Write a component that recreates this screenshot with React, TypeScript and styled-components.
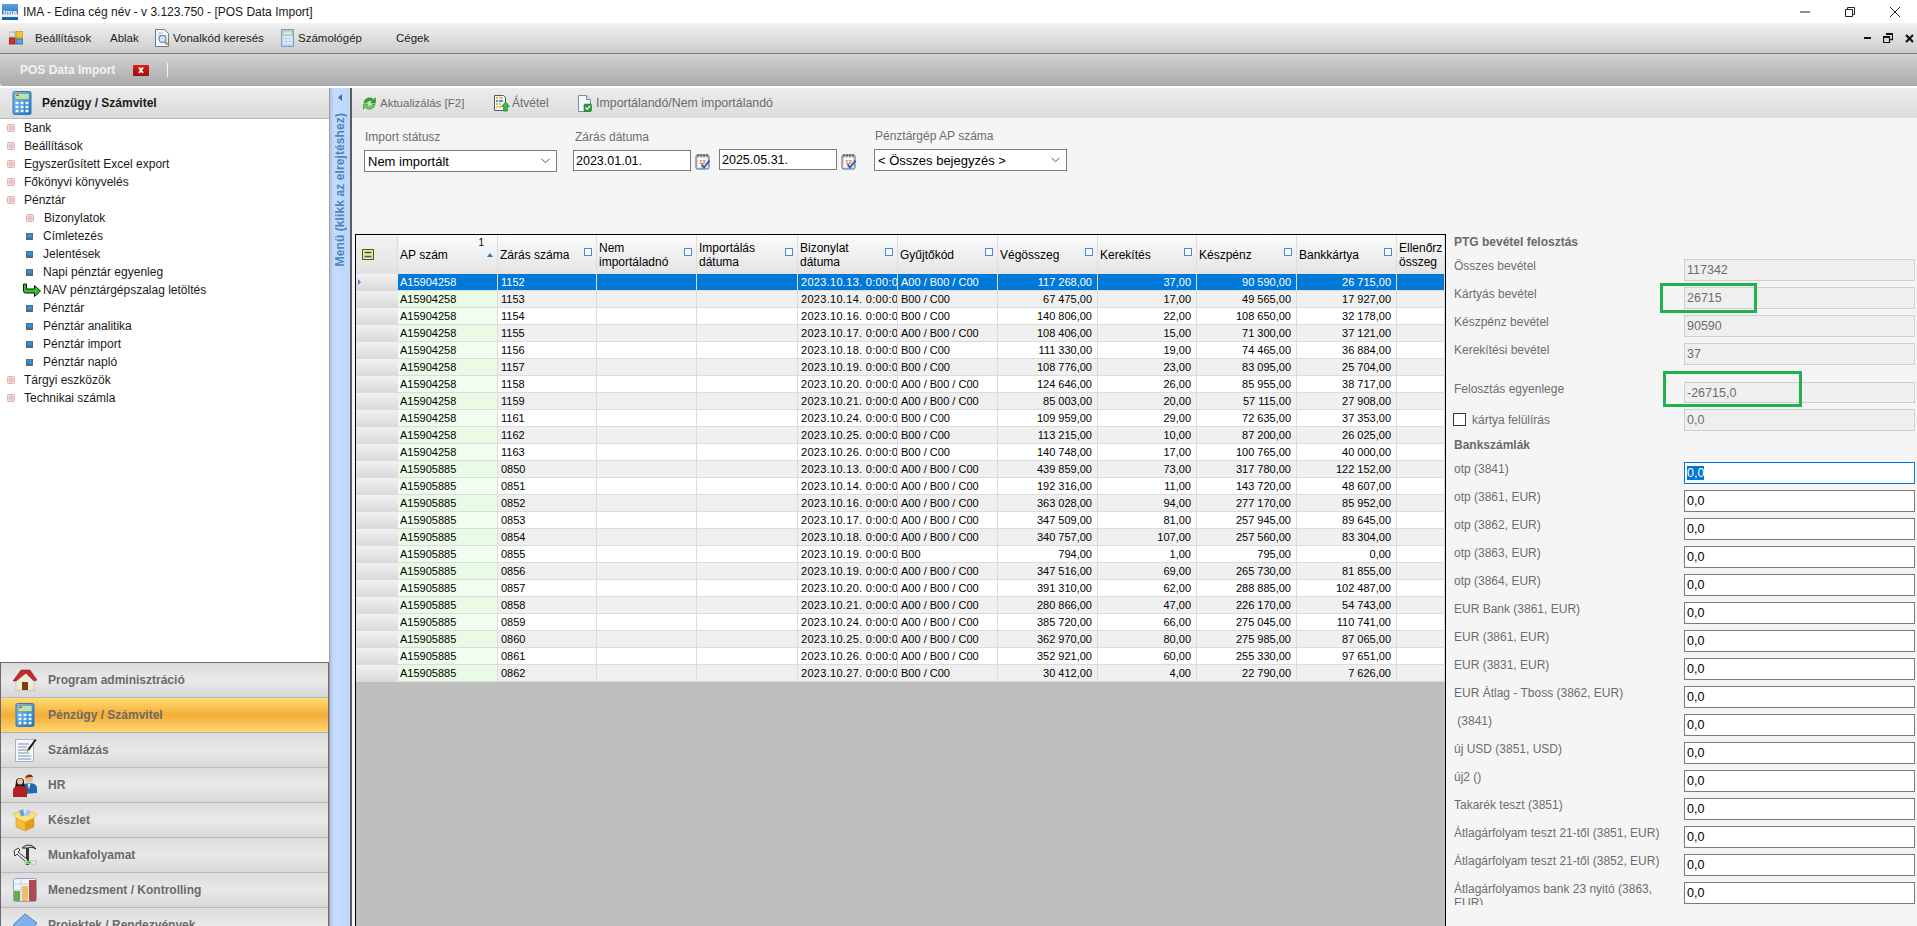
import React from "react";
import styled, { createGlobalStyle } from "styled-components";

const Global = createGlobalStyle`
  html, body { margin: 0; padding: 0; background: #fff; overflow: hidden; }
  body { font-family: "Liberation Sans", Arial, sans-serif; font-size: 12px; color: #000; }
  * { box-sizing: border-box; }
`;

const Window = styled.div`
  width: 1917px; height: 926px; display: flex; flex-direction: column; overflow: hidden; background: #fff;
`;
const TitleBar = styled.div`
  height: 23px; flex: none; display: flex; align-items: center; padding-left: 2px; background: #fff;
`;
const TitleText = styled.span`
  margin-left: 5px; font-size: 12px; color: #1a1a1a; white-space: nowrap;
`;
const WindowButtons = styled.div`
  margin-left: auto; display: flex; align-items: center; padding-right: 17px; gap: 35px;
`;
const MenuBar = styled.div`
  height: 31px; flex: none; display: flex; align-items: center; padding-left: 9px;
  background: linear-gradient(#f2f2f2, #cbcbcb); border-bottom: 1px solid #7f7f7f;
`;
const MenuItem = styled.div<{ $w: number; $gap?: number }>`
  width: ${p => p.$w}px; flex: none; display: flex; align-items: center; gap: ${p => p.$gap ?? 5}px;
  font-size: 11.5px; color: #1c1c1c; white-space: nowrap;
`;
const MdiButtons = styled.div`
  margin-left: auto; display: flex; align-items: center; gap: 12px; padding-right: 3px;
`;
const TabBar = styled.div`
  height: 32px; flex: none; display: flex; align-items: center; padding-left: 20px;
  background: linear-gradient(#d2d2d2, #a9a9a9); border-bottom-left-radius: 3px;
`;
const TabTitle = styled.span`
  width: 113px; font-weight: bold; font-size: 12px; color: #f2f2f2; white-space: nowrap;
`;
const TabSeparator = styled.span`
  width: 1px; height: 14px; margin-left: 18px; background: #f4f4f4;
`;
const Body = styled.div`
  flex: 1; min-height: 0; margin-top: 2px; display: flex; background: #fff;
`;
const Sidebar = styled.aside`
  width: 330px; flex: none; display: flex; flex-direction: column; border-right: 1px solid #a0a0a0; background: #fff; overflow: hidden;
`;
const SideHeader = styled.div`
  height: 31px; flex: none; display: flex; align-items: center; padding-left: 12px; gap: 10px;
  background: linear-gradient(#ececec, #dadada); border-bottom: 1px solid #b5b5b5;
  font-weight: bold; font-size: 12px; color: #1a1a1a;
`;
const Tree = styled.ul`
  list-style: none; margin: 0; padding: 0; flex: 1;
`;
const TreeRow = styled.li<{ $level: number; $arrow?: boolean }>`
  height: 18px; display: flex; align-items: center; font-size: 12px; color: #1a1a1a; white-space: nowrap;
  padding-left: ${p => (p.$arrow ? 22 : p.$level === 0 ? 7 : 26)}px;
  gap: ${p => (p.$arrow ? 1 : p.$level === 0 ? 9 : 10)}px;
`;
const Nav = styled.nav`
  flex: none; height: 264px; border: 1px solid #6a6a6a; border-bottom: 0; overflow: hidden;
`;
const NavItem = styled.div<{ $active?: boolean }>`
  height: 35px; display: flex; align-items: center; padding-left: 12px; gap: 11px;
  font-weight: bold; font-size: 12px; color: #6a6a6a; white-space: nowrap;
  border-bottom: 1px solid ${p => (p.$active ? "#aeb4bd" : "#b9b9b9")};
  background: ${p =>
    p.$active
      ? "linear-gradient(#ffdc75, #f4ad35 50%, #ffd673)"
      : "linear-gradient(#dcdcdc, #e9e9e9 50%, #d8d8d8)"};
`;
const NavIcon = styled.span`
  width: 24px; height: 24px; flex: none; display: flex; justify-content: center;
`;
const Strip = styled.div`
  width: 20px; flex: none; display: flex; flex-direction: column; align-items: center; padding-top: 6px;
  background: linear-gradient(90deg, #a8c4e6, #c3dcff 20%, #bdd7fb);
`;
const StripLabel = styled.span`
  margin-top: 12px; writing-mode: vertical-rl; transform: rotate(180deg); font-weight: bold; font-size: 12px;
  color: #4d84bb; white-space: nowrap; letter-spacing: 0.1px;
`;
const Divider = styled.div`
  width: 2px; flex: none; background: #5c5c5c;
`;
const Main = styled.main`
  flex: 1; min-width: 0; display: flex; flex-direction: column; background: #f5f5f5;
`;
const Toolbar = styled.div`
  height: 30px; flex: none; display: flex; align-items: center; padding-left: 10px;
  background: linear-gradient(#ececec, #dcdcdc);
`;
const ToolButton = styled.div<{ $w?: number; $gap: number; $size: number }>`
  ${p => (p.$w ? `width: ${p.$w}px;` : "")} flex: none; display: flex; align-items: center; gap: ${p => p.$gap}px;
  font-size: ${p => p.$size}px; color: #6b6b6b; white-space: nowrap;
`;
const FilterBar = styled.div`
  height: 116px; flex: none; display: flex; padding: 12px 0 0 12px;
`;
const FilterGroup = styled.div<{ $ml?: number; $up?: number }>`
  margin-left: ${p => p.$ml ?? 0}px; margin-top: ${p => -(p.$up ?? 0)}px;
`;
const FilterLabel = styled.div`
  height: 14px; line-height: 14px; margin: 0 0 6px 1px; font-size: 12px; color: #6d6d6d; white-space: nowrap;
`;
const FilterLabelDate = styled(FilterLabel)`
  margin-left: 2px;
`;
const Select = styled.div`
  width: 193px; height: 22px; display: flex; align-items: center; padding: 0 6px 0 3px;
  justify-content: space-between; border: 1px solid #7a7a7a; background: #fff; font-size: 13px; color: #000; white-space: nowrap;
`;
const DateRow = styled.div`
  display: flex; align-items: flex-start;
`;
const DateField = styled.div<{ $up?: boolean }>`
  width: 118px; height: 21px; display: flex; align-items: center; padding-left: 2px;
  border: 1px solid #7a7a7a; background: #fff; font-size: 12.5px; color: #000;
  margin-top: ${p => (p.$up ? -1 : 0)}px;
`;
const CalendarSlot = styled.span<{ $w: number }>`
  width: ${p => p.$w}px; flex: none; padding: 3px 0 0 4px;
`;
const Lower = styled.div`
  flex: 1; min-height: 0; display: flex; padding-left: 3px;
`;
const Grid = styled.div`
  width: 1091px; flex: none; border: 1px solid #000; border-bottom: 0; background: #bebebe; overflow: hidden;
`;
const COLS = "42px 100px 99px 100px 101px 100px 100px 100px 99px 100px 100px 48px";
const HeaderRow = styled.div`
  display: grid; grid-template-columns: ${COLS}; height: 39px;
  background: linear-gradient(#fbfbfb, #e4e4e4);
`;
const HeaderCell = styled.div`
  position: relative; display: flex; align-items: center; padding: 0 12px 0 2px; font-size: 12px; line-height: 14px; color: #000;
  border-right: 1px solid #dedede; overflow: hidden;
`;
const HeaderCorner = styled(HeaderCell)`
  padding: 0 0 0 6px; background: linear-gradient(#f2f2f2, #e2e2e2);
`;
const HeaderNowrap = styled.span`
  white-space: nowrap;
`;
const FilterGlyph = styled.span`
  position: absolute; right: 4px; top: 13px; width: 8px; height: 8px; border: 1px solid #4f86d9; background: #f7f9ff;
`;
const SortGlyph = styled.span`
  position: absolute; right: 4px; top: 18px; width: 0; height: 0;
  border-left: 3.5px solid transparent; border-right: 3.5px solid transparent; border-bottom: 4px solid #1f78c8;
`;
const SortIndex = styled.span`
  position: absolute; right: 13px; top: 2px; font-size: 10px; line-height: 11px;
`;
const DataRow = styled.div<{ $sel: boolean; $alt: boolean }>`
  display: grid; grid-template-columns: ${COLS}; height: 17px; font-size: 11px;
  color: ${p => (p.$sel ? "#fff" : "#000")};
  background: ${p => (p.$sel ? "#0078d7" : p.$alt ? "#f0f0f0" : "#fff")};
  --ap: ${p => (p.$sel ? "#0078d7" : p.$alt ? "#e9fbe5" : "#f0fdef")};
`;
const RowHead = styled.div`
  position: relative; background: linear-gradient(#f1f1f1, #dadada); border-bottom: 1px solid #dcdcdc;
`;
const RowMarker = styled.span`
  position: absolute; left: 2px; top: 5px; width: 0; height: 0;
  border-top: 3px solid transparent; border-bottom: 3px solid transparent; border-left: 3px solid #4f86d9;
`;
const Cell = styled.div<{ $right?: boolean; $ap?: boolean; $date?: boolean }>`
  padding: ${p => (p.$right ? "0 5px 0 0" : p.$ap ? "0 0 0 2px" : "0 0 0 3px")}; text-align: ${p => (p.$right ? "right" : "left")};
  line-height: 16px; border-right: 1px solid #dcdcdc; border-bottom: 1px solid #dcdcdc; overflow: hidden; white-space: nowrap;
  ${p => (p.$ap ? "background: var(--ap);" : "")}
  ${p => (p.$date ? "letter-spacing: 0.3px;" : "")}
`;
const Panel = styled.section`
  position: relative; flex: 1; min-width: 0; padding-left: 8px; overflow: hidden; background: #f5f5f5;
`;
const PanelTitle = styled.div<{ $h: number }>`
  height: ${p => p.$h}px; display: flex; align-items: flex-start; padding-top: 1px; font-weight: bold; font-size: 12px; line-height: 14px; color: #6a6a6a;
`;
const Fields = styled.div`
  display: flex; flex-direction: column; gap: 6px;
`;
const FieldRow = styled.div<{ $mt?: number }>`
  display: flex; height: 22px; margin-top: ${p => p.$mt ?? 0}px;
`;
const FieldLabel = styled.div`
  width: 230px; flex: none; height: 23px; overflow: hidden; padding: 1px 15px 0 0; font-size: 12px; line-height: 13.5px; color: #6d6d6d;
`;
const CheckLabel = styled.div`
  width: 230px; flex: none; display: flex; align-items: center; gap: 6px; font-size: 12px; color: #6d6d6d; padding-bottom: 1px;
`;
const CheckBox = styled.span`
  width: 13px; height: 13px; flex: none; margin-left: -1px; border: 1px solid #333; background: #fff;
`;
const ValueBox = styled.div<{ $kind: "ro" | "edit" | "focus"; $h?: number }>`
  width: 231px; height: ${p => p.$h ?? 22}px; display: flex; align-items: center; padding-left: 2px; font-size: 12.5px;
  border: 1px solid ${p => (p.$kind === "ro" ? "#cfcfcf" : p.$kind === "focus" ? "#0078d7" : "#7a7a7a")};
  background: ${p => (p.$kind === "ro" ? "#efefef" : "#fff")};
  color: ${p => (p.$kind === "ro" ? "#6d6d6d" : "#000")};
`;
const Selected = styled.span`
  background: #0078d7; color: #fff;
`;
const Highlight = styled.div<{ $l: number; $t: number; $w: number; $h: number }>`
  position: absolute; left: ${p => p.$l}px; top: ${p => p.$t}px; width: ${p => p.$w}px; height: ${p => p.$h}px;
  border: 3px solid #22b14c; pointer-events: none;
`;

/* ---------- icons ---------- */
const Logo = () => (
  <svg width="16" height="16" viewBox="0 0 16 16">
    <defs><linearGradient id="lg" x1="0" y1="0" x2="0" y2="1"><stop offset="0" stopColor="#5aa5e0" /><stop offset="1" stopColor="#0f5fa8" /></linearGradient></defs>
    <rect width="16" height="16" fill="url(#lg)" />
    <rect y="10.5" width="16" height="2.5" fill="#e8f2fb" />
    <text x="8" y="10.5" textAnchor="middle" fontSize="8" fontWeight="bold" fontFamily="Liberation Sans" fill="#fff">ima</text>
  </svg>
);
const WinMin = () => <svg width="10" height="10" viewBox="0 0 10 10"><path d="M0 5h10" stroke="#222" fill="none" /></svg>;
const WinRestore = () => <svg width="10" height="10" viewBox="0 0 10 10"><path d="M.5 2.5h7v7h-7zM2.5 2.5v-2h7v7h-2" stroke="#222" fill="none" /></svg>;
const WinClose = () => <svg width="10" height="10" viewBox="0 0 10 10"><path d="M0 0l10 10M10 0L0 10" stroke="#222" fill="none" /></svg>;
const MdiMin = () => <svg width="7" height="3" viewBox="0 0 7 3"><rect y="0" width="7" height="2" fill="#111" /></svg>;
const MdiRestore = () => <svg width="10" height="10" viewBox="0 0 10 10"><path d="M.5 3.5h6v6h-6zM3 .7h6.5v6H7" stroke="#111" strokeWidth="1.2" fill="none" /><rect x="3" width="7" height="2" fill="#111" /><rect y="3" width="7" height="2" fill="#111" /></svg>;
const MdiClose = () => <svg width="9" height="9" viewBox="0 0 9 9"><path d="M1 1l7 7M8 1L1 8" stroke="#111" strokeWidth="2.2" fill="none" /></svg>;
const MenuGlyph = () => (
  <svg width="14" height="14" viewBox="0 0 14 14">
    <rect x="0" y="1" width="6" height="5" fill="#e4e4e4" stroke="#9a9a9a" strokeWidth=".7" />
    <rect x="7" y="0" width="7" height="7" fill="#f4c430" stroke="#a9892a" strokeWidth=".8" />
    <rect x="0" y="7" width="6" height="6" fill="#cf2e2e" stroke="#8c1d1d" strokeWidth=".8" />
    <rect x="7" y="8" width="7" height="5" fill="#6c9ed6" stroke="#2f5f94" strokeWidth=".8" />
  </svg>
);
const DocSearch = () => (
  <svg width="14" height="18" viewBox="0 0 14 18">
    <path d="M.5.5h9l4 4v13H.5z" fill="#f4f6fa" stroke="#6c7b8c" />
    <path d="M3 4h5M3 6.5h8M3 9h3" stroke="#aab6c4" />
    <circle cx="7.5" cy="10" r="3.6" fill="#cfe4f8" stroke="#4f7ba6" />
    <path d="M10 13l2.6 2.6" stroke="#d07b2a" strokeWidth="2" />
  </svg>
);
const SmallCalc = () => (
  <svg width="13" height="18" viewBox="0 0 13 18">
    <rect x=".5" y=".5" width="12" height="17" fill="#bcd6ef" stroke="#7d9fc2" />
    <rect x="2" y="2" width="9" height="4" fill="#dce9d2" stroke="#8aa0a8" strokeWidth=".5" />
    <path d="M2.5 8h2M6 8h2M9 8h2M2.5 11h2M6 11h2M9 11h2M2.5 14h2M6 14h2M9 14h2" stroke="#f7fbff" strokeWidth="1.6" />
  </svg>
);
const TabClose = () => (
  <svg width="16" height="11" viewBox="0 0 16 11">
    <defs><linearGradient id="tc" x1="0" y1="0" x2="0" y2="1"><stop offset="0" stopColor="#e21c1c" /><stop offset="1" stopColor="#9c0c0c" /></linearGradient></defs>
    <rect width="16" height="11" rx="1" fill="url(#tc)" />
    <path d="M6 2.5l4 5.5M10 2.5L6 8" stroke="#fff" strokeWidth="1.7" />
  </svg>
);
const CalcIcon = ({ id }: { id: string }) => (
  <svg width="20" height="24" viewBox="0 0 20 24">
    <defs><linearGradient id={id} x1="0" y1="0" x2="1" y2="1"><stop offset="0" stopColor="#7cc4f5" /><stop offset="1" stopColor="#1f6fc4" /></linearGradient></defs>
    <rect x="1" y=".5" width="18" height="23" rx="1.5" fill={`url(#${id})`} stroke="#3b77ad" />
    <rect x="3" y="2.5" width="14" height="6" fill="#bfe0a8" stroke="#5e8d7a" strokeWidth=".5" />
    <rect x="4" y="3.5" width="3" height="1.5" fill="#d94b3a" />
    <path d="M3.5 12h3M8.5 12h3M13.5 12h3M3.5 16h3M8.5 16h3M13.5 16h3M3.5 20h3M8.5 20h3M13.5 20h3" stroke="#f4fbff" strokeWidth="2.4" />
  </svg>
);
const Bullet = () => (
  <svg width="8" height="8" viewBox="0 0 8 8" style={{ flex: "none" }}>
    <rect x=".5" y=".5" width="7" height="7" rx="1" fill="#f3d6d6" stroke="#dcb4b4" />
    <rect x="2" y="2" width="4" height="4" fill="#ecc0c0" />
  </svg>
);
const BlueBullet = () => (
  <svg width="7" height="7" viewBox="0 0 7 7" style={{ flex: "none" }}>
    <rect width="7" height="7" fill="#59697d" />
    <rect x="1" y="1" width="5" height="3.5" fill="#2f8fe0" />
  </svg>
);
const GreenArrow = () => (
  <svg width="20" height="14" viewBox="0 0 20 14" style={{ flex: "none" }}>
    <path d="M1.5 1h3v5h8V2.5l6 5.5-6 5.5V10H3.5a2 2 0 0 1-2-2z" fill="#22cc1e" stroke="#111" strokeWidth="1" />
  </svg>
);
const Refresh = () => (
  <svg width="15" height="15" viewBox="0 0 15 15">
    <path d="M2 7a5.5 5.5 0 0 1 9.6-3.4L13.5 2v5h-5l1.7-1.7A3.5 3.5 0 0 0 5 6.6z" fill="#2fa82a" stroke="#1f7a1f" strokeWidth=".5" />
    <path d="M13 8a5.5 5.5 0 0 1-9.6 3.4L1.5 13V8h5l-1.7 1.7A3.5 3.5 0 0 0 10 8.4z" fill="#6fd05a" stroke="#1f7a1f" strokeWidth=".5" />
  </svg>
);
const TakeOver = () => (
  <svg width="16" height="17" viewBox="0 0 16 17">
    <path d="M.5.5h9l2 2v13H.5z" fill="#f6f6f6" stroke="#4a5a70" />
    <path d="M2 3h2M5 3h4" stroke="#e2b12d" strokeWidth="1.5" />
    <path d="M2 6h2M5 6h4" stroke="#2c6db0" strokeWidth="1.5" />
    <path d="M2 9h2M5 9h2M2 12h2M5 12h2" stroke="#e2b12d" strokeWidth="1.5" />
    <path d="M11.5 7l4 4.5H13.4V16H9.6v-4.5H7.5z" fill="#3dbb3a" stroke="#217a20" strokeWidth=".7" />
  </svg>
);
const DocCheck = () => (
  <svg width="14" height="17" viewBox="0 0 14 17">
    <path d="M.5.5h8l4 4v12H.5z" fill="#f4f7f9" stroke="#7b8b99" />
    <path d="M8.5.5v4h4" fill="#dfe6ec" stroke="#7b8b99" />
    <rect x="6" y="9" width="7.5" height="7.5" rx="1" fill="#23a03a" stroke="#146b26" strokeWidth=".5" />
    <path d="M7.5 12.5l1.7 1.8 2.8-3.4" stroke="#fff" strokeWidth="1.2" fill="none" />
  </svg>
);
const Chevron = () => <svg width="9" height="6" viewBox="0 0 9 6"><path d="M.5.7l4 4 4-4" stroke="#555" fill="none" /></svg>;
const Calendar = () => (
  <svg width="16" height="17" viewBox="0 0 16 17">
    <rect x="1" y="2" width="13" height="14" rx="1.5" fill="#dcdce4" stroke="#63636e" />
    <rect x="3" y="5" width="9" height="9" fill="#fbfbfd" />
    <path d="M3 1v3M6 1v3M9 1v3M12 1v3" stroke="#50505a" strokeWidth="1.2" />
    <text x="7.5" y="10.5" textAnchor="middle" fontSize="6" fontWeight="bold" fontFamily="Liberation Sans" fill="#e06a1a">12</text>
    <path d="M6.5 11.5l2.5 3 5.5-7" stroke="#2a5fc0" strokeWidth="2" fill="none" />
  </svg>
);
const ColumnChooser = () => (
  <svg width="12" height="11" viewBox="0 0 12 11">
    <rect x=".5" y=".5" width="11" height="10" fill="#f6e97c" stroke="#55552a" />
    <path d="M2.5 3.5h7M2.5 7.5h7" stroke="#3a4fae" strokeWidth="1.5" />
  </svg>
);
const House = () => (
  <svg width="24" height="24" viewBox="0 0 24 24">
    <path d="M3 13v9h18v-9L12 5z" fill="#f2ead8" stroke="#b9ad96" strokeWidth=".5" />
    <path d="M0 13L8 2h9l7 10-3 1-8-8-10 8z" fill="#c42a2a" stroke="#7f1616" strokeWidth=".5" />
    <rect x="9" y="14" width="6" height="8" fill="#7a3d14" />
    <rect x="1" y="22" width="22" height="1.5" fill="#cfcfcf" />
  </svg>
);
const Notepad = () => (
  <svg width="24" height="24" viewBox="0 0 24 24">
    <rect x="2.5" y="1.5" width="18" height="22" fill="#f5f8fd" stroke="#9fb4cc" />
    <path d="M5 6h11M5 9h9M5 12h9M5 15h11M5 18h13M5 21h13" stroke="#6f8fb8" />
    <path d="M22 1l1.5 1-7 10-2.5 2 .5-3z" fill="#1d1d1d" />
    <path d="M14.5 11l-.5 3 2.5-2z" fill="#e2b12d" />
  </svg>
);
const People = () => (
  <svg width="24" height="24" viewBox="0 0 24 24">
    <circle cx="16" cy="5.5" r="4" fill="#e9b88e" />
    <path d="M12 5c1-4 7-5 8-1-3 0-5 0-8 1z" fill="#6a3b1a" />
    <path d="M10 21v-7c0-3 3-4 6-4s8 1 8 5v5z" fill="#1f6bb0" />
    <path d="M14.5 10.5h3l-1.5 6z" fill="#f4f4f4" />
    <path d="M3 8c0-4 8-4 8 0 0 3 1 5 1 7H2c0-2 1-4 1-7z" fill="#2a1710" />
    <circle cx="7" cy="8.5" r="3" fill="#eec0a0" />
    <path d="M0 24v-6c0-4 3-5 7-5s7 1 7 5v6z" fill="#b02025" />
  </svg>
);
const BoxIcon = () => (
  <svg width="24" height="24" viewBox="0 0 24 24">
    <path d="M3 10l9 4 9-4v9l-9 4-9-4z" fill="#f3bd3c" stroke="#c98e1e" strokeWidth=".5" />
    <path d="M12 14v9l9-4v-9z" fill="#e29a22" />
    <path d="M3 10L0 6l6-2 6 3 7-3 5 2-3 4-9 4z" fill="#fde27a" stroke="#cfa331" strokeWidth=".5" />
    <rect x="7" y="2" width="4" height="6" fill="#5aa7e0" transform="rotate(-15 9 5)" />
    <rect x="13" y="2" width="4" height="6" fill="#a9c8e8" transform="rotate(15 15 5)" />
  </svg>
);
const Tools = () => (
  <svg width="24" height="24" viewBox="0 0 24 24">
    <path d="M9 5c4-4 10-4 14 1-3-2-6-2-8-1z" fill="#e4e4e4" stroke="#222" />
    <rect x="13" y="5" width="3" height="17" fill="#333" />
    <path d="M1 8l4-3 2 2-2 2 10 8-2 2-9-8-2 2z" fill="#f4f4f4" stroke="#333" />
    <rect x="12" y="18" width="11" height="3" fill="#eee" stroke="#999" strokeWidth=".5" />
    <rect x="13" y="18.5" width="5" height="2" fill="#40c84a" />
  </svg>
);
const ChartIcon = () => (
  <svg width="24" height="24" viewBox="0 0 24 24">
    <rect x=".5" y=".5" width="23" height="23" rx="2" fill="#f2f6fb" stroke="#8ea2bd" />
    <path d="M.5 6h15M.5 12h15M8 .5v23" stroke="#c3cfdf" />
    <rect x="1" y="13" width="6" height="10" fill="#6ca84a" />
    <rect x="9" y="8" width="6" height="15" fill="#ecbd6a" />
    <rect x="16" y="2" width="7" height="21" fill="#b24a4a" />
  </svg>
);
const Project = () => (
  <svg width="24" height="24" viewBox="0 0 24 24">
    <path d="M0 12L12 1l12 9-9 12z" fill="#7fb2ea" stroke="#4f83bf" />
  </svg>
);

/* ---------- data ---------- */
const TREE: { t: string; l: 0 | 1; k?: "blue" | "arrow" }[] = [
  { t: "Bank", l: 0 }, { t: "Beállítások", l: 0 }, { t: "Egyszerűsített Excel export", l: 0 },
  { t: "Főkönyvi könyvelés", l: 0 }, { t: "Pénztár", l: 0 }, { t: "Bizonylatok", l: 1 },
  { t: "Címletezés", l: 1, k: "blue" }, { t: "Jelentések", l: 1, k: "blue" },
  { t: "Napi pénztár egyenleg", l: 1, k: "blue" }, { t: "NAV pénztárgépszalag letöltés", l: 1, k: "arrow" },
  { t: "Pénztár", l: 1, k: "blue" }, { t: "Pénztár analitika", l: 1, k: "blue" },
  { t: "Pénztár import", l: 1, k: "blue" }, { t: "Pénztár napló", l: 1, k: "blue" },
  { t: "Tárgyi eszközök", l: 0 }, { t: "Technikai számla", l: 0 },
];
const NAV: { t: string; i: React.ReactNode; a?: boolean }[] = [
  { t: "Program adminisztráció", i: <House /> },
  { t: "Pénzügy / Számvitel", i: <CalcIcon id="calcnav" />, a: true },
  { t: "Számlázás", i: <Notepad /> }, { t: "HR", i: <People /> }, { t: "Készlet", i: <BoxIcon /> },
  { t: "Munkafolyamat", i: <Tools /> }, { t: "Menedzsment / Kontrolling", i: <ChartIcon /> },
  { t: "Projektek / Rendezvények", i: <Project /> },
];
const HEADERS = ["Zárás száma", "Nem importáladnó", "Importálás dátuma", "Bizonylat dátuma", "Gyűjtőkód", "Végösszeg", "Kerekítés", "Készpénz", "Bankkártya"];
const ABC = "A00 / B00 / C00", BC = "B00 / C00";
type Row = [string, string, string, string, string, string, string];
const R1: Row[] = [
  ["1152", "13", ABC, "117 268,00", "37,00", "90 590,00", "26 715,00"],
  ["1153", "14", BC, "67 475,00", "17,00", "49 565,00", "17 927,00"],
  ["1154", "16", BC, "140 806,00", "22,00", "108 650,00", "32 178,00"],
  ["1155", "17", ABC, "108 406,00", "15,00", "71 300,00", "37 121,00"],
  ["1156", "18", BC, "111 330,00", "19,00", "74 465,00", "36 884,00"],
  ["1157", "19", BC, "108 776,00", "23,00", "83 095,00", "25 704,00"],
  ["1158", "20", ABC, "124 646,00", "26,00", "85 955,00", "38 717,00"],
  ["1159", "21", ABC, "85 003,00", "20,00", "57 115,00", "27 908,00"],
  ["1161", "24", BC, "109 959,00", "29,00", "72 635,00", "37 353,00"],
  ["1162", "25", BC, "113 215,00", "10,00", "87 200,00", "26 025,00"],
  ["1163", "26", BC, "140 748,00", "17,00", "100 765,00", "40 000,00"],
];
const R2: Row[] = [
  ["0850", "13", ABC, "439 859,00", "73,00", "317 780,00", "122 152,00"],
  ["0851", "14", ABC, "192 316,00", "11,00", "143 720,00", "48 607,00"],
  ["0852", "16", ABC, "363 028,00", "94,00", "277 170,00", "85 952,00"],
  ["0853", "17", ABC, "347 509,00", "81,00", "257 945,00", "89 645,00"],
  ["0854", "18", ABC, "340 757,00", "107,00", "257 560,00", "83 304,00"],
  ["0855", "19", "B00", "794,00", "1,00", "795,00", "0,00"],
  ["0856", "19", ABC, "347 516,00", "69,00", "265 730,00", "81 855,00"],
  ["0857", "20", ABC, "391 310,00", "62,00", "288 885,00", "102 487,00"],
  ["0858", "21", ABC, "280 866,00", "47,00", "226 170,00", "54 743,00"],
  ["0859", "24", ABC, "385 720,00", "66,00", "275 045,00", "110 741,00"],
  ["0860", "25", ABC, "362 970,00", "80,00", "275 985,00", "87 065,00"],
  ["0861", "26", ABC, "352 921,00", "60,00", "255 330,00", "97 651,00"],
  ["0862", "27", BC, "30 412,00", "4,00", "22 790,00", "7 626,00"],
];
const ROWS = [...R1.map(r => ["A15904258", ...r]), ...R2.map(r => ["A15905885", ...r])];
const READONLY = [["Összes bevétel", "117342"], ["Kártyás bevétel", "26715"], ["Készpénz bevétel", "90590"], ["Kerekítési bevétel", "37"]];
const BANKS = ["otp (3861, EUR)", "otp (3862, EUR)", "otp (3863, EUR)", "otp (3864, EUR)", "EUR Bank (3861, EUR)", "EUR (3861, EUR)", "EUR (3831, EUR)", "EUR Átlag - Tboss (3862, EUR)", "\u00a0(3841)", "új USD (3851, USD)", "új2 ()", "Takarék teszt (3851)", "Átlagárfolyam teszt 21-től (3851, EUR)", "Átlagárfolyam teszt 21-től (3852, EUR)", "Átlagárfolyamos bank 23 nyitó (3863, EUR)"];

export default function App() {
  return (
    <Window>
      <Global />
      <TitleBar>
        <Logo />
        <TitleText>IMA - Edina cég név - v 3.123.750 - [POS Data Import]</TitleText>
        <WindowButtons><WinMin /><WinRestore /><WinClose /></WindowButtons>
      </TitleBar>
      <MenuBar>
        <MenuItem $w={26}><MenuGlyph /></MenuItem>
        <MenuItem $w={75}>Beállítások</MenuItem>
        <MenuItem $w={45}>Ablak</MenuItem>
        <MenuItem $w={126} $gap={4}><DocSearch />Vonalkód keresés</MenuItem>
        <MenuItem $w={115} $gap={4}><SmallCalc />Számológép</MenuItem>
        <MenuItem $w={60}>Cégek</MenuItem>
        <MdiButtons><MdiMin /><MdiRestore /><MdiClose /></MdiButtons>
      </MenuBar>
      <TabBar>
        <TabTitle>POS Data Import</TabTitle>
        <TabClose />
        <TabSeparator />
      </TabBar>
      <Body>
        <Sidebar>
          <SideHeader><CalcIcon id="calchead" />Pénzügy / Számvitel</SideHeader>
          <Tree>
            {TREE.map((n, i) => (
              <TreeRow key={i} $level={n.l} $arrow={n.k === "arrow"}>
                {n.k === "arrow" ? <GreenArrow /> : n.k === "blue" ? <BlueBullet /> : <Bullet />}
                {n.t}
              </TreeRow>
            ))}
          </Tree>
          <Nav>
            {NAV.map(n => (
              <NavItem key={n.t} $active={n.a}><NavIcon>{n.i}</NavIcon><span>{n.t}</span></NavItem>
            ))}
          </Nav>
        </Sidebar>
        <Strip>
          <svg width="4" height="7" viewBox="0 0 4 7"><path d="M4 0v7L0 3.5z" fill="#2f6fb0" /></svg>
          <StripLabel>Menü (klikk az elrejtéshez)</StripLabel>
        </Strip>
        <Divider />
        <Main>
          <Toolbar>
            <ToolButton $w={132} $gap={3} $size={11.5}><Refresh />Aktualizálás [F2]</ToolButton>
            <ToolButton $w={84} $gap={2} $size={12}><TakeOver />Átvétel</ToolButton>
            <ToolButton $gap={4} $size={12.4}><DocCheck />Importálandó/Nem importálandó</ToolButton>
          </Toolbar>
          <FilterBar>
            <FilterGroup>
              <FilterLabel>Import státusz</FilterLabel>
              <Select>Nem importált<Chevron /></Select>
            </FilterGroup>
            <FilterGroup $ml={16}>
              <FilterLabelDate>Zárás dátuma</FilterLabelDate>
              <DateRow>
                <DateField>2023.01.01.</DateField>
                <CalendarSlot $w={28}><Calendar /></CalendarSlot>
                <DateField $up>2025.05.31.</DateField>
                <CalendarSlot $w={37}><Calendar /></CalendarSlot>
              </DateRow>
            </FilterGroup>
            <FilterGroup $up={1}>
              <FilterLabel>Pénztárgép AP száma</FilterLabel>
              <Select>{"< Összes bejegyzés >"}<Chevron /></Select>
            </FilterGroup>
          </FilterBar>
          <Lower>
            <Grid>
              <HeaderRow>
                <HeaderCorner><ColumnChooser /></HeaderCorner>
                <HeaderCell>AP szám<SortIndex>1</SortIndex><SortGlyph /></HeaderCell>
                {HEADERS.map(h => (
                  <HeaderCell key={h}><span>{h}</span><FilterGlyph /></HeaderCell>
                ))}
                <HeaderCell><HeaderNowrap>Ellenőrz<br />összeg</HeaderNowrap></HeaderCell>
              </HeaderRow>
              {ROWS.map((r, i) => (
                <DataRow key={i} $sel={i === 0} $alt={i % 2 === 1}>
                  <RowHead>{i === 0 && <RowMarker />}</RowHead>
                  <Cell $ap>{r[0]}</Cell>
                  <Cell>{r[1]}</Cell>
                  <Cell />
                  <Cell />
                  <Cell $date>2023.10.{r[2]}. 0:00:0</Cell>
                  <Cell>{r[3]}</Cell>
                  <Cell $right>{r[4]}</Cell>
                  <Cell $right>{r[5]}</Cell>
                  <Cell $right>{r[6]}</Cell>
                  <Cell $right>{r[7]}</Cell>
                  <Cell />
                </DataRow>
              ))}
            </Grid>
            <Panel>
              <PanelTitle $h={25}>PTG bevétel felosztás</PanelTitle>
              <Fields>
                {READONLY.map(([l, v]) => (
                  <FieldRow key={l}><FieldLabel>{l}</FieldLabel><ValueBox $kind="ro">{v}</ValueBox></FieldRow>
                ))}
                <FieldRow $mt={11}><FieldLabel>Felosztás egyenlege</FieldLabel><ValueBox $kind="ro" $h={21}>-26715,0</ValueBox></FieldRow>
                <FieldRow $mt={-1}><CheckLabel><CheckBox />kártya felülírás</CheckLabel><ValueBox $kind="ro">0,0</ValueBox></FieldRow>
              </Fields>
              <PanelTitle $h={31}>
                <BankTitle>Bankszámlák</BankTitle>
              </PanelTitle>
              <Fields>
                <FieldRow><FieldLabel>otp (3841)</FieldLabel><ValueBox $kind="focus"><Selected>0,0</Selected></ValueBox></FieldRow>
                {BANKS.map(l => (
                  <FieldRow key={l}><FieldLabel>{l}</FieldLabel><ValueBox $kind="edit">0,0</ValueBox></FieldRow>
                ))}
              </Fields>
              <Highlight $l={214} $t={49} $w={97} $h={30} />
              <Highlight $l={217} $t={137} $w={139} $h={36} />
            </Panel>
          </Lower>
        </Main>
      </Body>
    </Window>
  );
}

const BankTitle = styled.span`
  margin-top: 6px;
`;
